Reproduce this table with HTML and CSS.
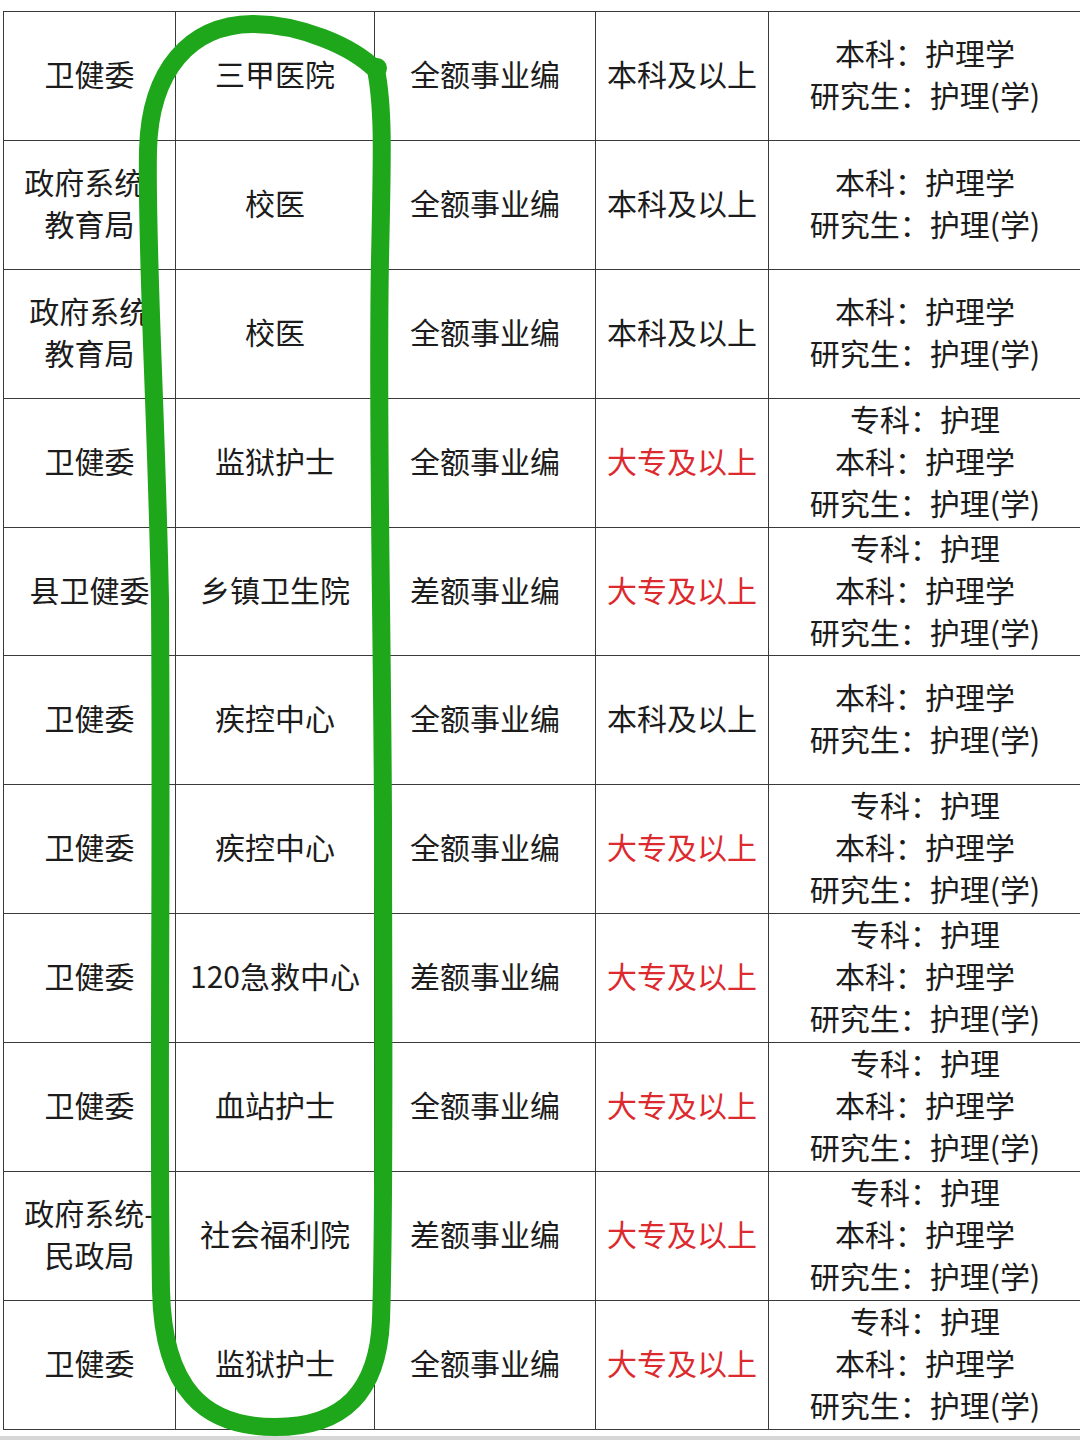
FILE: index.html
```html
<!DOCTYPE html>
<html lang="zh-CN">
<head>
<meta charset="utf-8">
<title>护理岗位</title>
<link rel="stylesheet" href="styles.css">
</head>
<body>
<div class="page">
  <div class="grid">
    <div class="cell">卫健委</div><div class="cell">三甲医院</div><div class="cell">全额事业编</div><div class="cell">本科及以上</div><div class="cell">本科：护理学<br>研究生：护理(学)</div>

    <div class="cell">政府系统-<br>教育局</div><div class="cell">校医</div><div class="cell">全额事业编</div><div class="cell">本科及以上</div><div class="cell">本科：护理学<br>研究生：护理(学)</div>

    <div class="cell"><span class="nudge">政府系统-</span>教育局</div><div class="cell">校医</div><div class="cell">全额事业编</div><div class="cell">本科及以上</div><div class="cell">本科：护理学<br>研究生：护理(学)</div>

    <div class="cell">卫健委</div><div class="cell">监狱护士</div><div class="cell">全额事业编</div><div class="cell red">大专及以上</div><div class="cell">专科：护理<br>本科：护理学<br>研究生：护理(学)</div>

    <div class="cell">县卫健委</div><div class="cell">乡镇卫生院</div><div class="cell">差额事业编</div><div class="cell red">大专及以上</div><div class="cell">专科：护理<br>本科：护理学<br>研究生：护理(学)</div>

    <div class="cell">卫健委</div><div class="cell">疾控中心</div><div class="cell">全额事业编</div><div class="cell">本科及以上</div><div class="cell">本科：护理学<br>研究生：护理(学)</div>

    <div class="cell">卫健委</div><div class="cell">疾控中心</div><div class="cell">全额事业编</div><div class="cell red">大专及以上</div><div class="cell">专科：护理<br>本科：护理学<br>研究生：护理(学)</div>

    <div class="cell">卫健委</div><div class="cell">120急救中心</div><div class="cell">差额事业编</div><div class="cell red">大专及以上</div><div class="cell">专科：护理<br>本科：护理学<br>研究生：护理(学)</div>

    <div class="cell">卫健委</div><div class="cell">血站护士</div><div class="cell">全额事业编</div><div class="cell red">大专及以上</div><div class="cell">专科：护理<br>本科：护理学<br>研究生：护理(学)</div>

    <div class="cell">政府系统-<br>民政局</div><div class="cell">社会福利院</div><div class="cell">差额事业编</div><div class="cell red">大专及以上</div><div class="cell">专科：护理<br>本科：护理学<br>研究生：护理(学)</div>

    <div class="cell">卫健委</div><div class="cell">监狱护士</div><div class="cell">全额事业编</div><div class="cell red">大专及以上</div><div class="cell">专科：护理<br>本科：护理学<br>研究生：护理(学)</div>
  </div>
  <div class="bottom-band"></div>

  <svg class="marker" width="1080" height="1440" viewBox="0 0 1080 1440" aria-hidden="true">
    <path d="M 376 70 C 352 46 300 24 252 24 C 190 25 150 70 148 150 C 146 250 156 400 160 600 C 162 900 158 1100 161 1290 C 163 1390 205 1427 275 1427 C 345 1427 378 1390 381 1320 C 385 1200 383 1000 383 820 C 382 600 377 420 380 260 C 382 160 384 110 376 70" fill="none" stroke="#1fa71b" stroke-width="18" stroke-linecap="round" stroke-linejoin="round"/>
    <circle cx="377" cy="68" r="10" fill="#1fa71b"/>
  </svg>
</div>
</body>
</html>
```

FILE: styles.css
```css
html, body {
  margin: 0;
  padding: 0;
  background: #ffffff;
}

body {
  width: 1080px;
  height: 1440px;
  overflow: hidden;
  font-family: "Noto Sans CJK SC", "Noto Sans", sans-serif;
  color: #1c1c1c;
}

.page {
  position: relative;
  width: 1080px;
  height: 1440px;
  padding-top: 11px;
  box-sizing: border-box;
}

.grid {
  display: grid;
  grid-template-columns: 172px 199px 221px 173px 313px;
  grid-auto-rows: 128.9px;
  width: 1079px;
  margin-left: 3px;
  border-top: 1px solid #3a3a3a;
  border-left: 1px solid #3a3a3a;
}

.cell {
  box-sizing: border-box;
  border-right: 1px solid #3a3a3a;
  border-bottom: 1px solid #3a3a3a;
  padding-bottom: 6px;
  display: flex;
  flex-direction: column;
  align-items: center;
  justify-content: center;
  text-align: center;
  font-size: 30px;
  line-height: 42px;
  white-space: nowrap;
}

.nudge {
  display: block;
  padding-left: 10px;
}

.red {
  color: #dc2a2e;
}

.bottom-band {
  height: 4px;
  margin-top: 6px;
  background: #d6d6d6;
}

.marker {
  position: absolute;
  left: 0;
  top: 0;
  pointer-events: none;
}
```
